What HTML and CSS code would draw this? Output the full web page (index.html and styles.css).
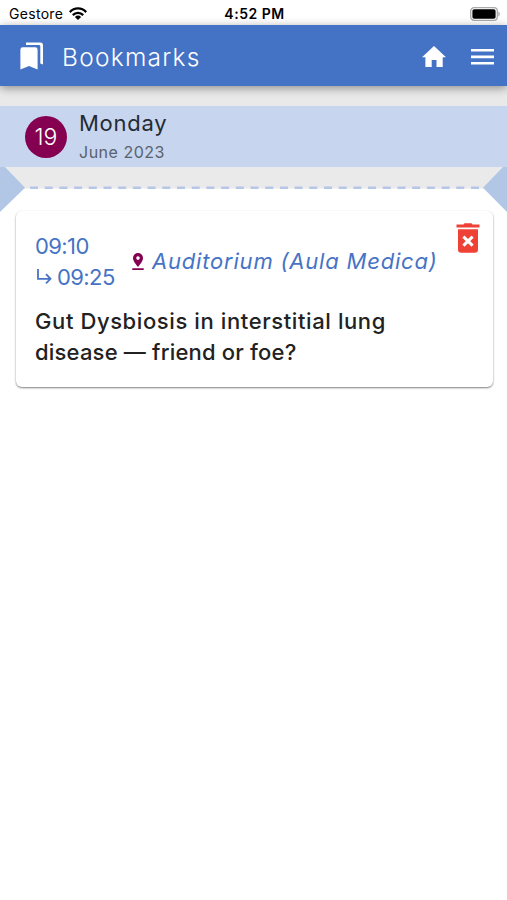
FILE: index.html
```html
<!DOCTYPE html>
<html lang="en">
<head>
<meta charset="utf-8">
<title>Bookmarks</title>
<link rel="stylesheet" href="styles.css">
</head>
<body>
<div class="status">
  <div class="carrier"><span class="carrier-name">Gestore</span>
    <svg class="wifi" viewBox="0 0 18 13" width="18" height="13"><g fill="none" stroke="#000" stroke-width="2.3"><path d="M.8 5.1C5.4.2 12.6.2 17.2 5.1"/><path d="M3.8 8.1c2.9-3 7.5-3 10.4 0"/></g><path d="M9 13 5.9 9.9a4.4 4.4 0 0 1 6.2 0z"/></svg>
  </div>
  <span class="clock">4:52 PM</span>
  <svg class="battery" viewBox="0 0 30 14" width="30" height="14"><rect x=".7" y=".7" width="26.6" height="12.6" rx="3.4" fill="#fff" stroke="#aaa" stroke-width="1.3"/><rect x="2.4" y="2.2" width="23.2" height="9.6" rx="1.8"/><path d="M28.3 4.5c2 .8 2 4.2 0 5z" fill="#aaa"/></svg>
</div>
<header class="bar">
  <svg class="bookmarks-icon" viewBox="0 0 24 28" width="24" height="28" fill="#fff"><path d="M2.800 5.300h12.400a2.400 2.400 0 0 1 2.400 2.400V27.500L9 24 .4 27.500V7.700a2.400 2.400 0 0 1 2.400-2.400z"/><path d="M6 .4h14.200A2.800 2.800 0 0 1 23 3.200V22.600l-2.700-1.200V4.200a1.200 1.200 0 0 0-1.200-1.200H6z"/></svg>
  <h1 class="title">Bookmarks</h1>
  <svg class="home" viewBox="0 0 24 21" width="24" height="21" fill="#fff"><path d="M9.700 21v-7h4.800v7h6.200V11.200H24L12 0 0 11.200h3.400V21z"/></svg>
  <svg class="menu" viewBox="0 0 23 16" width="23" height="16" fill="#fff"><path d="M0 0h23v2.600H0zM0 6.600h23v2.600H0zM0 13h23v2.600H0z"/></svg>
</header>
<main>
  <section class="day">
    <div class="number"><span>19</span></div>
    <div class="date"><div class="weekday">Monday</div><div class="month">June 2023</div></div>
  </section>
  <svg class="divider" viewBox="0 0 507 45" width="507" height="45"><path d="M0 0h507v21.500H0z" fill="#eaeaea"/><path d="M30 20.700h455" stroke="#b5c6e7" stroke-width="2.600" stroke-dasharray="8 6.700"/><path d="M0 0h5l20 20.700L0 45zM507 0h-4l-20 20.700L507 45z" fill="#b2c6e5"/></svg>
  <article class="card">
    <div class="meta">
      <div class="times">
        <div class="start">09:10</div>
        <div class="end"><svg viewBox="0 0 15 16" width="15" height="16" fill="none" stroke="#4673c5" stroke-width="1.800"><path d="M1 0v9.800h12M9 5.200l4.500 4.600L9 14.400"/></svg><span>09:25</span></div>
      </div>
      <div class="place">
        <svg viewBox="0 0 12 17" width="12" height="17" fill="#850050"><path fill-rule="evenodd" d="M6 0a5 5 0 0 1 5 5c0 3.600-5 9-5 9S1 8.600 1 5a5 5 0 0 1 5-5zm0 3.300a1.800 1.800 0 1 0 0 3.600 1.800 1.800 0 0 0 0-3.600zM.3 15.300h11.400V17H.3z"/></svg>
        <em>Auditorium (Aula Medica)</em>
      </div>
      <svg class="trash" viewBox="0 0 24 30" width="24" height="30"><path fill="#ee4236" d="M.5 1.500h7L8.500.2h7l1 1.300h7v3H.5zM2 6.300h20v20.200a3.200 3.200 0 0 1-3.200 3.200H5.200A3.200 3.200 0 0 1 2 26.500z"/><path d="m7.400 13.600 9.200 9M16.600 13.600l-9.200 9" stroke="#fff" stroke-width="3"/></svg>
    </div>
    <h2 class="talk"><span class="line one">Gut Dysbiosis in interstitial lung</span> <span class="line two">disease — friend or foe?</span></h2>
  </article>
</main>
</body>
</html>
```
FILE: styles.css
```css
* { box-sizing: border-box; }
body { margin: 0; background: #fff; color: #222; font-family: Inter, "Open Sans", sans-serif; }
svg { display: block; flex: none; }
h1, h2 { margin: 0; }
.status { height: 25px; display: grid; grid-template-columns: 1fr auto 1fr; align-items: center; padding: 2px 7px 0 9px; color: #000; }
.carrier { display: flex; align-items: center; gap: 6px; }
.carrier-name { font-size: 14px; letter-spacing: .3px; }
.clock { font-size: 14px; font-weight: 600; letter-spacing: .5px; }
.battery { justify-self: end; }
.bar { height: 61px; display: flex; align-items: center; background: #4472c5; padding: 2px 13px 0 20px; position: relative; box-shadow: 0 2px 9px rgba(0,0,0,.4); }
.bookmarks-icon { margin-top: -2px; }
.title { margin-left: 18px; flex: 1; color: #fff; font-size: 24.5px; line-height: 30px; font-weight: 300; letter-spacing: 1.25px; }
.home { margin-right: 25px; }
main { background: linear-gradient(#e9e9e9 0 102px, #fff 102px); padding: 20px 0 15px; }
.day { height: 61px; background: #c7d5ee; display: flex; align-items: center; padding-left: 25px; gap: 12px; }
.number { width: 42px; height: 42px; border-radius: 50%; background: #850050; color: #fff; display: grid; place-items: center; font-size: 23px; font-weight: 300; }
.weekday { font-size: 22px; line-height: 31px; letter-spacing: .75px; color: #252b33; }
.month { font-size: 16px; line-height: 27px; letter-spacing: .5px; color: #59616d; }
.card { width: 477px; height: 176px; margin: -1px 15px 0 16px; padding: 20px 13px 0 19px; position: relative; background: #fff; border-radius: 6px; box-shadow: 0 1px 2px rgba(0,0,0,.5); }
.meta { display: flex; color: #4673c5; font-size: 22px; line-height: 30.5px; }
.times { width: 97px; letter-spacing: -.6px; }
.end { display: flex; align-items: center; gap: 5px; padding-left: 2px; }
.place { flex: 1; display: flex; align-items: center; gap: 8px; white-space: nowrap; letter-spacing: .8px; }
.trash { margin-top: -8px; }
.talk { margin-top: 14px; font-size: 22px; line-height: 30.5px; font-weight: 500; }
.line { display: block; white-space: nowrap; }
.one { letter-spacing: .6px; }
.two { letter-spacing: .2px; }
```
